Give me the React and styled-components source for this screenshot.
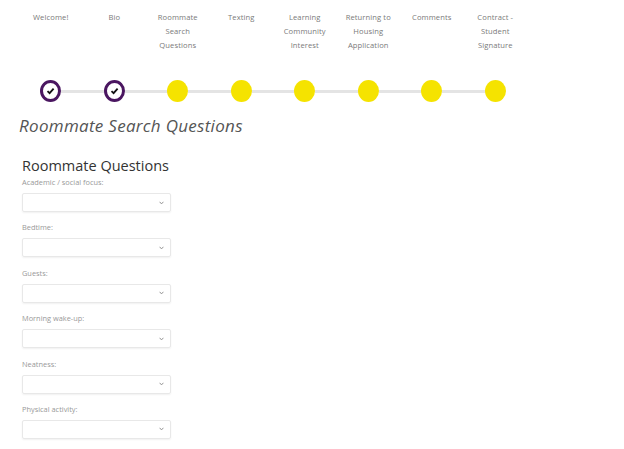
import styled, { createGlobalStyle } from "styled-components";

const GlobalStyle = createGlobalStyle`
  html, body {
    margin: 0;
    padding: 0;
    background: #fff;
    font-family: "Open Sans", "Liberation Sans", sans-serif;
  }
`;

const Page = styled.div`
  width: 624px;
  height: 449px;
  overflow: hidden;
`;

const Stepper = styled.div`
  padding: 10px 0 0 19px;
`;

const LabelRow = styled.div`
  display: flex;
  height: 70px;
`;

const StepLabel = styled.div`
  width: 63.5px;
  text-align: center;
  font-size: 7.6px;
  line-height: 14px;
  color: #7a7a7a;
  letter-spacing: 0.1px;
`;

const CircleRow = styled.div`
  display: flex;
  align-items: center;
  height: 22px;
`;

const Cell = styled.div`
  width: 63.5px;
  display: flex;
  align-items: center;
`;

const Half = styled.div`
  flex: 1;
  height: 3px;
  background: ${(p) => (p.$off ? "transparent" : "#e4e4e4")};
`;

const Circle = styled.div`
  width: 21px;
  height: 22px;
  box-sizing: border-box;
  border-radius: 50%;
  flex-shrink: 0;
  display: flex;
  align-items: center;
  justify-content: center;
  background: ${(p) => (p.$done ? "#fff" : "#f5e300")};
  border: ${(p) => (p.$done ? "3px solid #4a1660" : "none")};
`;

const Content = styled.div`
  padding: 13px 0 0 19px;
`;

const Title = styled.h1`
  margin: 0;
  font-size: 17px;
  font-weight: 400;
  font-style: italic;
  color: #555;
  line-height: 22px;
  letter-spacing: 0.3px;
`;

const Section = styled.div`
  padding: 19px 0 0 3px;
`;

const SectionTitle = styled.h2`
  margin: 0 0 1px;
  font-size: 14.5px;
  font-weight: 400;
  color: #333;
  line-height: 20px;
`;

const Field = styled.div`
  display: flex;
  flex-direction: column;
  margin-bottom: 10.4px;
`;

const FieldLabel = styled.label`
  font-size: 7.4px;
  color: #999;
  line-height: 11px;
  margin-bottom: 5px;
`;

const Select = styled.div`
  width: 149px;
  height: 19px;
  box-sizing: border-box;
  border: 1px solid #e8e8e8;
  border-radius: 2px;
  box-shadow: 0 1px 2px rgba(0, 0, 0, 0.06);
  display: flex;
  align-items: center;
  justify-content: flex-end;
  padding-right: 6px;
`;

const steps = [
  ["Welcome!"],
  ["Bio"],
  ["Roommate", "Search", "Questions"],
  ["Texting"],
  ["Learning", "Community", "Interest"],
  ["Returning to", "Housing", "Application"],
  ["Comments"],
  ["Contract -", "Student", "Signature"],
];

const fields = [
  "Academic / social focus:",
  "Bedtime:",
  "Guests:",
  "Morning wake-up:",
  "Neatness:",
  "Physical activity:",
];

const Check = () => (
  <svg width="9" height="8" viewBox="0 0 9 8">
    <path d="M1.5 4.2 L3.6 6.2 L7.6 1.6" fill="none" stroke="#111" strokeWidth="1.8" />
  </svg>
);

const Chevron = () => (
  <svg width="5" height="4" viewBox="0 0 5 4">
    <path d="M0.6 0.8 L2.5 2.9 L4.4 0.8" fill="none" stroke="#888" strokeWidth="0.9" />
  </svg>
);

export default function App() {
  return (
    <Page>
      <GlobalStyle />
      <Stepper>
        <LabelRow>
          {steps.map((lines, i) => (
            <StepLabel key={i}>
              {lines.map((l, j) => (
                <div key={j}>{l}</div>
              ))}
            </StepLabel>
          ))}
        </LabelRow>
        <CircleRow>
          {steps.map((_, i) => (
            <Cell key={i}>
              <Half $off={i === 0} />
              <Circle $done={i < 2}>{i < 2 && <Check />}</Circle>
              <Half $off={i === steps.length - 1} />
            </Cell>
          ))}
        </CircleRow>
      </Stepper>
      <Content>
        <Title>Roommate Search Questions</Title>
        <Section>
          <SectionTitle>Roommate Questions</SectionTitle>
          {fields.map((f) => (
            <Field key={f}>
              <FieldLabel>{f}</FieldLabel>
              <Select>
                <Chevron />
              </Select>
            </Field>
          ))}
        </Section>
      </Content>
    </Page>
  );
}
